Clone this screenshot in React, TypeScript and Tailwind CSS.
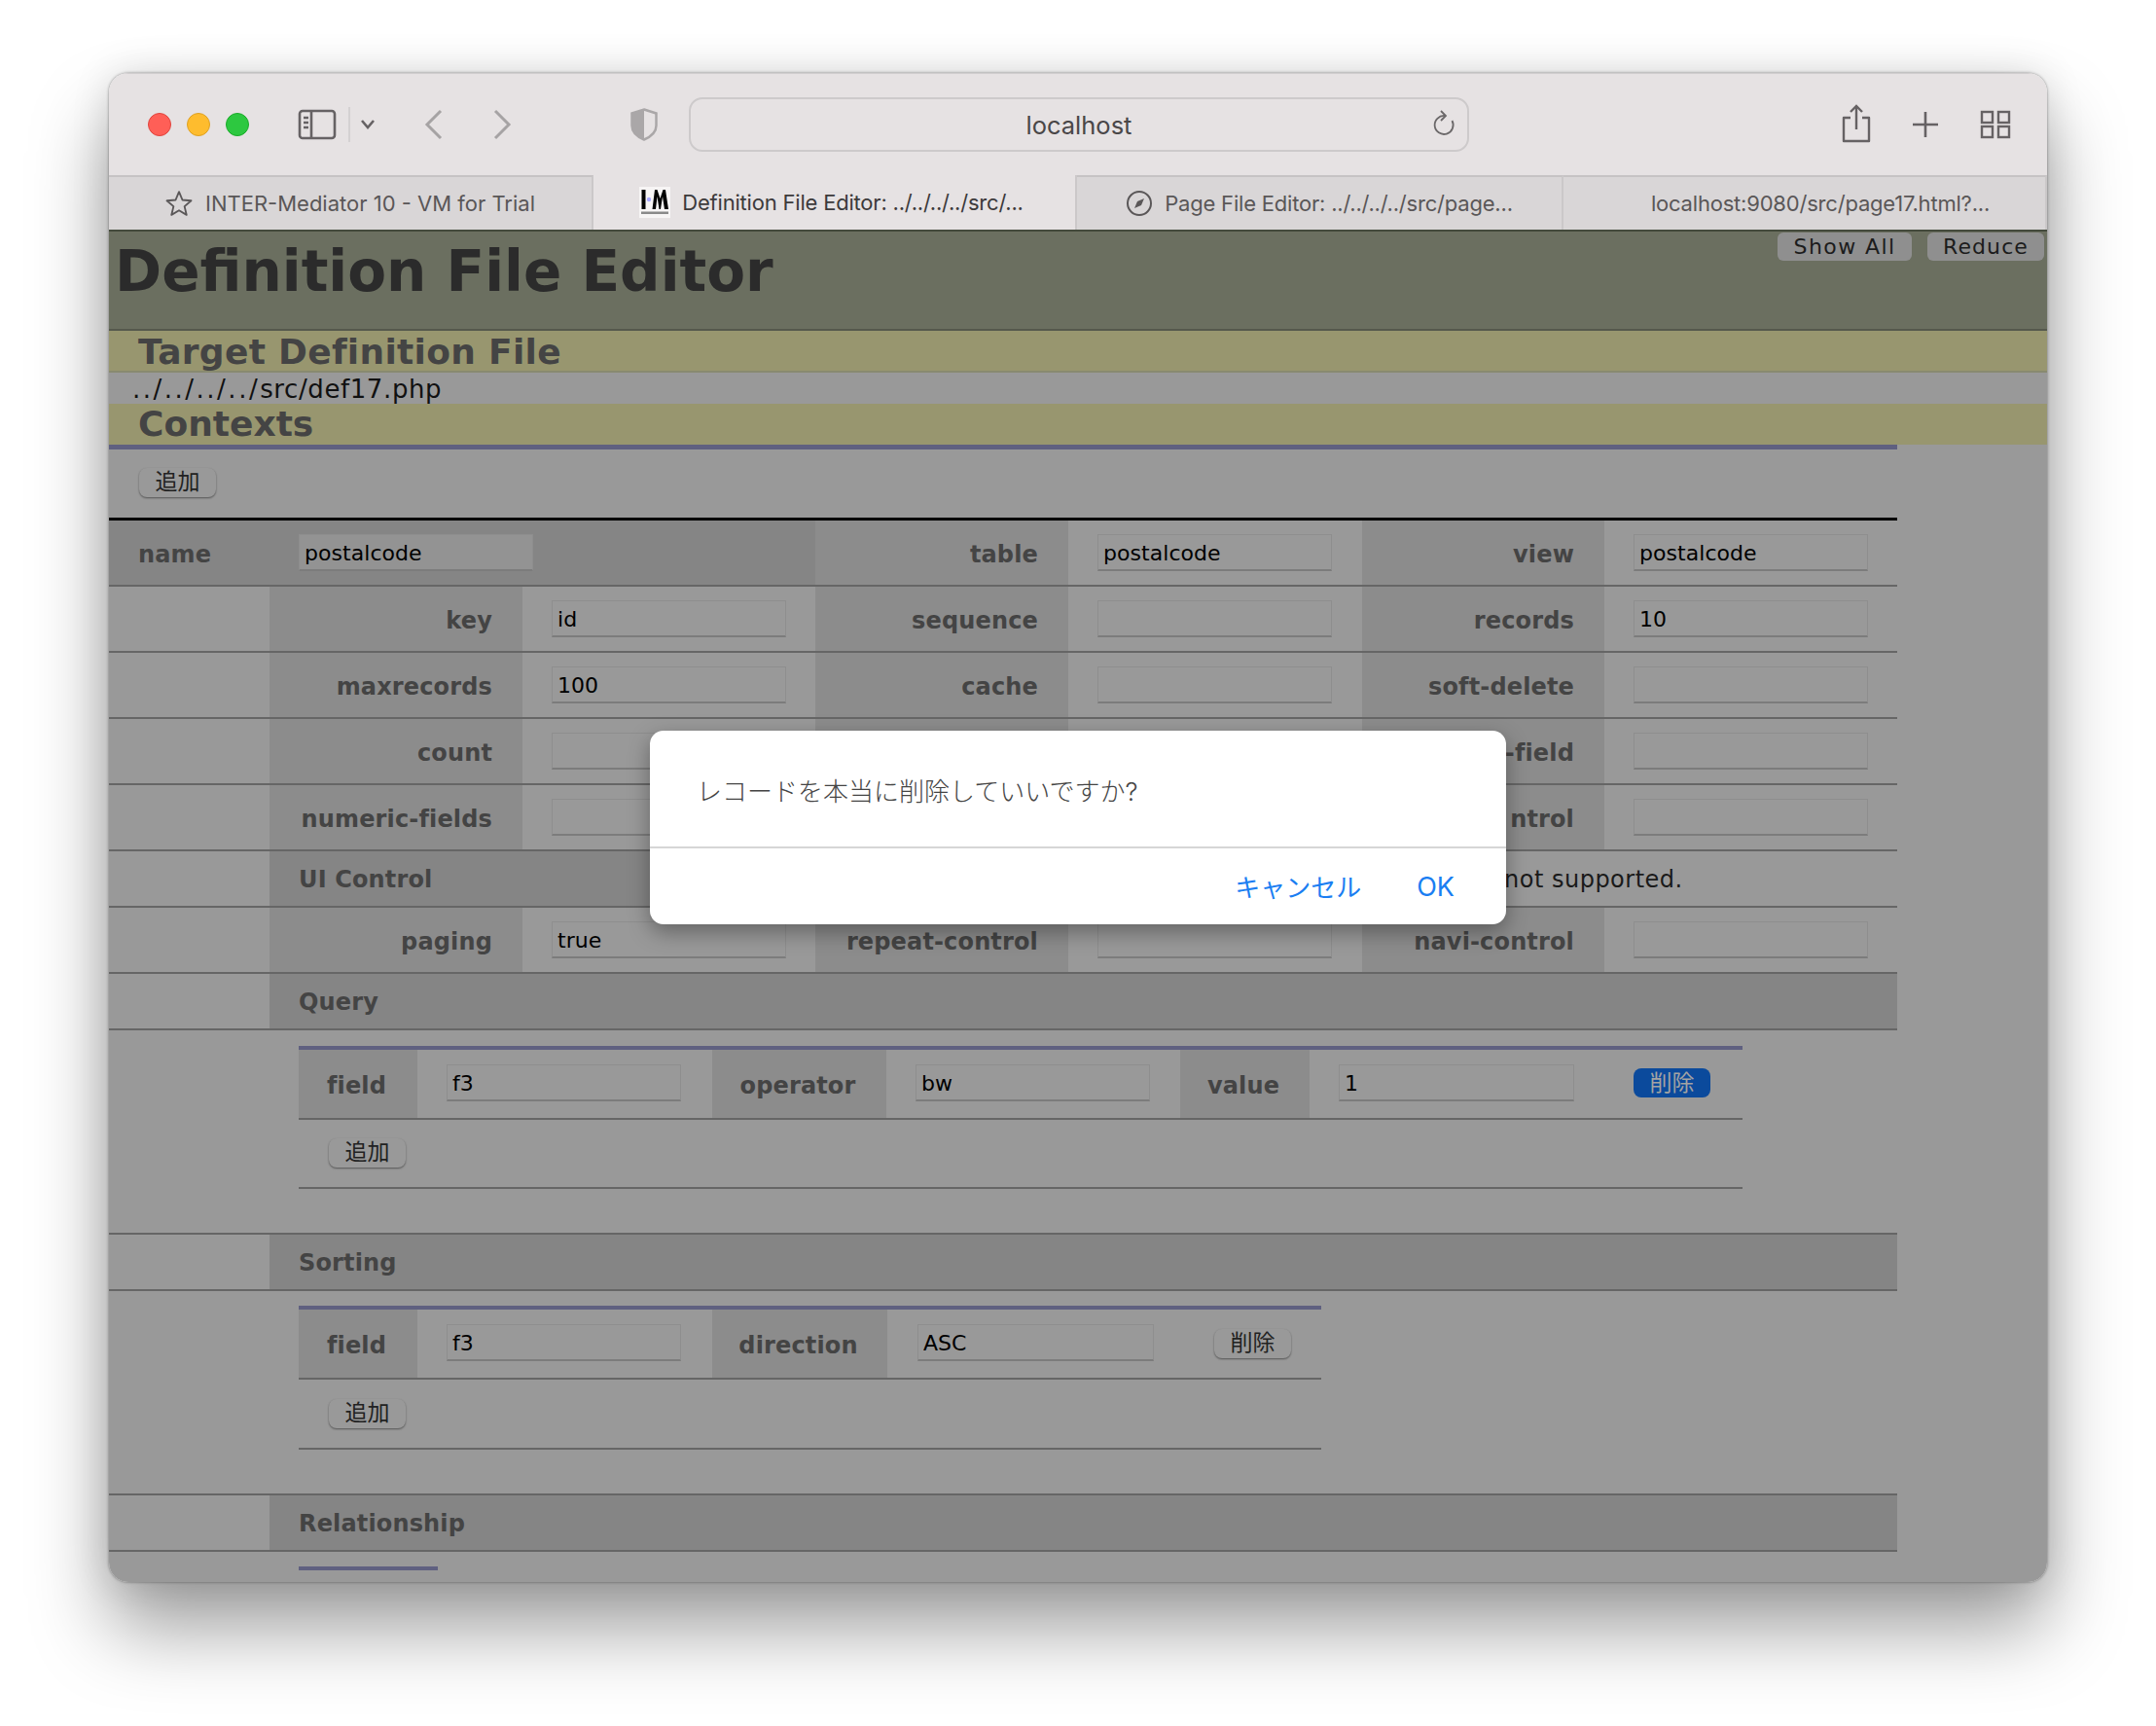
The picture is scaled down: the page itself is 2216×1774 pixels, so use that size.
import React from "react";

const sans = "font-[family-name:'DejaVu_Sans','Noto_Sans_CJK_JP',sans-serif]";

function Field({ value = "", w = "w-[241px]", light = false }: { value?: string; w?: string; light?: boolean }) {
  return (
    <input
      readOnly
      defaultValue={value}
      className={`${w} h-[38px] ${light ? "bg-[#939393]" : "bg-[#999999]"} border border-[#8e8e8e] border-b-2 border-b-[#7c7c7c] pl-[5px] pt-[2px] text-[22px] tracking-[0.05px] text-black outline-none ${sans}`}
    />
  );
}

function Th({ w, children, bg = "bg-[#8c8c8c]", center = false }: { w: string; children: React.ReactNode; bg?: string; center?: boolean }) {
  return (
    <div className={`${w} ${bg} flex h-full shrink-0 items-center ${center ? "justify-center pr-[3px]" : "justify-end pr-[31px]"} pt-[3px] text-[24px] font-bold tracking-[0.15px] text-[#444444]`}>
      {children}
    </div>
  );
}

function Td({ w, children, pad = "pl-[30px]" }: { w: string; children?: React.ReactNode; pad?: string }) {
  return <div className={`${w} ${pad} flex h-full shrink-0 items-center`}>{children}</div>;
}

function TripleRow({ cells, h = "h-[68px]" }: { cells: [string, string, string, string, string, string]; h?: string }) {
  const [a, av, b, bv, c, cv] = cells;
  return (
    <div className={`flex w-[1838px] ${h} border-b-2 border-[#666666]`}>
      <div className="h-full w-[165px] shrink-0" />
      <Th w="w-[260px]">{a}</Th>
      <Td w="w-[301px]"><Field value={av} /></Td>
      <Th w="w-[260px]">{b}</Th>
      <Td w="w-[302px]"><Field value={bv} /></Td>
      <Th w="w-[249px]">{c}</Th>
      <Td w="w-[301px]"><Field value={cv} /></Td>
    </div>
  );
}

function SectionRow({ title }: { title: string }) {
  return (
    <div className="flex h-[58px] w-[1838px] border-b-2 border-[#666666]">
      <div className="h-full w-[165px] shrink-0" />
      <div className="flex h-full flex-1 items-center bg-[#858585] pl-[30px] pt-[2px] text-[24px] font-bold tracking-[0.15px] text-[#444444]">{title}</div>
    </div>
  );
}

function SmallBtn({ children, primary = false }: { children: React.ReactNode; primary?: boolean }) {
  return (
    <button
      className={`flex h-[30px] w-[79px] items-center justify-center rounded-[8px] text-[23px] leading-none ${
        primary
          ? "bg-[#0b4a9c] text-[#a3a3a3]"
          : "bg-[#999999] text-[#222222] shadow-[0_1px_2px_rgba(0,0,0,0.45)]"
      }`}
    >
      {children}
    </button>
  );
}

function Logo() {
  return (
    <svg width="32" height="32" viewBox="0 0 32 32" className="shrink-0">
      <rect width="32" height="32" fill="#f7f5f5" />
      <rect x="2.5" y="3" width="4" height="20" fill="#000" />
      <circle cx="10" cy="13" r="2.2" fill="#a9a9ff" />
      <polygon points="13.5,23 16,3 18.5,3 21.5,12 24.5,3 27,3 30,23 26,23 24,10 22,23 20.5,23 18.5,10 17,23" fill="#000" />
      <rect x="2" y="25.5" width="28" height="2.5" fill="#8a8a8a" />
    </svg>
  );
}

function Tab({ w, active, children, icon, extra = "" }: { w: string; active?: boolean; children: React.ReactNode; icon?: React.ReactNode; extra?: string }) {
  return (
    <div
      className={`${w} ${extra} flex h-[56px] items-center justify-center gap-[12px] border-r-2 border-[#cbc8c9] text-[22px] ${
        active ? "bg-[#e6e2e3] text-[#3c3a3b]" : "border-t-2 border-t-[#c6c3c4] bg-[#d9d6d7] text-[#5a5758]"
      }`}
    >
      {icon}
      <span>{children}</span>
    </div>
  );
}

export default function App() {
  return (
    <div className="h-[1774px] w-[2216px] overflow-hidden bg-white pl-[112px] pt-[75px]">
      <div className="relative h-[1551px] w-[1992px] overflow-hidden rounded-[20px] shadow-[0_0_3px_rgba(0,0,0,0.45),0_0_40px_rgba(0,0,0,0.12),0_48px_80px_rgba(0,0,0,0.38)]">
        {/* browser chrome */}
        <div className="flex h-[105px] items-center border-t border-[#d0cdce] bg-[#e6e2e3] font-[family-name:'Inter',sans-serif]">
          <div className="ml-[40px] flex gap-[16px]">
            <span className="h-[24px] w-[24px] rounded-full border border-[#e0443e] bg-[#ff5f57]" />
            <span className="h-[24px] w-[24px] rounded-full border border-[#dea123] bg-[#febc2e]" />
            <span className="h-[24px] w-[24px] rounded-full border border-[#1aab29] bg-[#2dc840]" />
          </div>
          <svg width="40" height="32" viewBox="0 0 40 32" fill="none" className="ml-[50px]" stroke="#666264" strokeWidth="2.6">
            <rect x="2" y="2" width="36" height="28" rx="3" />
            <line x1="14" y1="2" x2="14" y2="30" />
            <line x1="6" y1="9" x2="11" y2="9" />
            <line x1="6" y1="14" x2="11" y2="14" />
            <line x1="6" y1="19" x2="11" y2="19" />
          </svg>
          <div className="ml-[12px] h-[36px] w-[2px] bg-[#d4d1d2]" />
          <svg width="16" height="12" viewBox="0 0 16 12" fill="none" className="ml-[10px]" stroke="#666264" strokeWidth="2.6">
            <polyline points="2,2 8,9 14,2" />
          </svg>
          <svg width="20" height="32" viewBox="0 0 20 32" fill="none" className="ml-[50px]" stroke="#a6a3a4" strokeWidth="3">
            <polyline points="17,2 3,16 17,30" />
          </svg>
          <svg width="20" height="32" viewBox="0 0 20 32" fill="none" className="ml-[50px]" stroke="#a6a3a4" strokeWidth="3">
            <polyline points="3,2 17,16 3,30" />
          </svg>
          <svg width="28" height="34" viewBox="0 0 28 34" fill="none" className="ml-[122px]">
            <path d="M14 1.5 L26.5 5.5 V18 C26.5 25 21 29.5 14 32.5 C7 29.5 1.5 25 1.5 18 V5.5 Z" stroke="#aaa7a8" strokeWidth="2.5" />
            <path d="M14 1.5 L1.5 5.5 V18 C1.5 25 7 29.5 14 32.5 Z" fill="#aaa7a8" />
          </svg>
          <div className="relative ml-[32px] flex h-[56px] w-[802px] items-center justify-center rounded-[14px] border-2 border-[#cdcacb] pt-[3px] text-[25.5px] text-[#4a4748]">
            localhost
            <svg width="24" height="30" viewBox="0 0 24 30" fill="none" className="absolute right-[12px] top-[11px]" stroke="#6b6869" strokeWidth="1.8">
              <path d="M13 6 A9.5 9.5 0 1 0 20.5 11" />
              <polyline points="9,1 14,6 9,11" />
            </svg>
          </div>
          <svg width="32" height="40" viewBox="0 0 32 40" fill="none" className="ml-[382px] -translate-y-[1px]" stroke="#666264" strokeWidth="2.4">
            <path d="M10 14 H3 V38 H29 V14 H22" strokeLinejoin="round" />
            <line x1="16" y1="2" x2="16" y2="26" />
            <polyline points="10,8 16,2 22,8" />
          </svg>
          <svg width="28" height="28" viewBox="0 0 28 28" fill="none" className="ml-[41px]" stroke="#666264" strokeWidth="2.6">
            <line x1="14" y1="1" x2="14" y2="27" />
            <line x1="1" y1="14" x2="27" y2="14" />
          </svg>
          <svg width="32" height="30" viewBox="0 0 32 30" fill="none" className="ml-[42px]" stroke="#666264" strokeWidth="2.4">
            <rect x="2" y="2" width="11" height="11" />
            <rect x="19" y="2" width="11" height="11" />
            <rect x="2" y="17" width="11" height="11" />
            <rect x="19" y="17" width="11" height="11" />
          </svg>
        </div>
        {/* tabs */}
        <div className="flex h-[56px] font-[family-name:'Inter',sans-serif]">
          <Tab
            w="w-[498px]"
            extra="pr-[1px]"
            icon={
              <svg width="30" height="30" viewBox="0 0 24 24" fill="none" stroke="#5a5758" strokeWidth="1.5" strokeLinejoin="round">
                <polygon points="12,2.5 14.8,9.2 22,9.8 16.5,14.5 18.2,21.5 12,17.8 5.8,21.5 7.5,14.5 2,9.8 9.2,9.2" />
              </svg>
            }
          >
            INTER-Mediator 10 - VM for Trial
          </Tab>
          <Tab w="w-[497px]" active icon={<Logo />} extra="tracking-[-0.2px] pr-[6px]">
            Definition File Editor: ../../../../src/...
          </Tab>
          <Tab
            w="w-[500px]"
            extra="tracking-[-0.2px]"
            icon={
              <svg width="28" height="28" viewBox="0 0 28 28" fill="none">
                <circle cx="14" cy="14" r="12" stroke="#5a5758" strokeWidth="2" />
                <polygon points="19,9 16,16 9,19 12,12" fill="#5a5758" />
              </svg>
            }
          >
            Page File Editor: ../../../../src/page...
          </Tab>
          <Tab w="w-[497px]" extra="pl-[33px] tracking-[-0.2px]">localhost:9080/src/page17.html?...</Tab>
        </div>
        {/* page */}
        <div className={`h-[1390px] bg-[#999999] ${sans}`}>
          <div className="flex h-[104px] items-start justify-between border-y-2 border-t-[#444a3c] border-b-[#55584d] bg-[#6b6f60]">
            <h1 className="ml-[6px] mt-[5px] text-[58px] font-bold leading-[72px] text-[#2b2b2b]">Definition File Editor</h1>
            <div className="mr-[3px] mt-[1px] flex gap-[16px]">
              <button className="h-[29px] w-[138px] rounded-[6px] bg-[#8f8f8f] text-[22px] leading-[28px] tracking-[1.4px] text-[#1c1c1c]">Show All</button>
              <button className="h-[29px] w-[120px] rounded-[6px] bg-[#8f8f8f] text-[22px] leading-[28px] tracking-[1.1px] text-[#1c1c1c]">Reduce</button>
            </div>
          </div>
          <div className="h-[43px] border-b-2 border-[#888a70] bg-[#98966f] pl-[30px] text-[36px] font-bold leading-[44px] tracking-[0.3px] text-[#444444]">Target Definition File</div>
          <div className="h-[32px] pl-[24px] pt-[1px] text-[26px] leading-[32px] tracking-[0.6px] text-[#111111]">
            <span className="tracking-[2.5px]">../../../../</span>src/def17.php
          </div>
          <div className="h-[42px] bg-[#98966f] pl-[30px] text-[36px] font-bold leading-[42px] text-[#444444]">Contexts</div>

          <div className="w-[1838px]">
            <div className="h-[5px] bg-[#5f6080]" />
            <div className="flex h-[73px] items-center border-b-[3px] border-black pb-[3px] pl-[31px]">
              <SmallBtn>追加</SmallBtn>
            </div>

            <div className="flex h-[68px] border-b-2 border-[#666666]">
              <div className="flex h-full w-[726px] shrink-0 items-center bg-[#858585]">
                <span className="w-[195px] pl-[30px] pt-[3px] text-[24px] font-bold tracking-[0.15px] text-[#444444]">name</span>
                <Field value="postalcode" light />
              </div>
              <Th w="w-[260px]">table</Th>
              <Td w="w-[302px]"><Field value="postalcode" /></Td>
              <Th w="w-[249px]">view</Th>
              <Td w="w-[301px]"><Field value="postalcode" /></Td>
            </div>
            <TripleRow cells={["key", "id", "sequence", "", "records", "10"]} />
            <TripleRow cells={["maxrecords", "100", "cache", "", "soft-delete", ""]} />
            <TripleRow cells={["count", "", "", "", "-field", ""]} />
            <TripleRow cells={["numeric-fields", "", "", "", "ntrol", ""]} />
            <div className="flex h-[58px] border-b-2 border-[#666666]">
              <div className="h-full w-[165px] shrink-0" />
              <div className="flex h-full w-[561px] items-center bg-[#858585] pl-[30px] pt-[2px] text-[24px] font-bold tracking-[0.15px] text-[#444444]">UI Control</div>
              <div className="flex h-full flex-1 items-center pl-[708px] pt-[2px] text-[24px] tracking-[0.5px] text-[#1a1a1a]">not supported.</div>
            </div>
            <TripleRow cells={["paging", "true", "repeat-control", "", "navi-control", ""]} />

            <SectionRow title="Query" />
            <div className="flex h-[210px] flex-col border-b-2 border-[#666666] pl-[195px] pt-[16px]">
              <div className="w-[1484px]">
                <div className="h-[4px] bg-[#5f6080]" />
                <div className="flex h-[72px] border-b-2 border-[#666666]">
                  <Th w="w-[122px]" center>field</Th>
                  <Td w="w-[303px]" pad="pl-[30px] pb-[3px]"><Field value="f3" /></Td>
                  <Th w="w-[179px]" center>operator</Th>
                  <Td w="w-[302px]" pad="pl-[30px] pb-[3px]"><Field value="bw" /></Td>
                  <Th w="w-[133px]" center>value</Th>
                  <Td w="w-[303px]" pad="pl-[30px] pb-[3px]"><Field value="1" w="w-[242px]" /></Td>
                  <div className="flex h-full items-center pb-[2px] pl-[30px]"><SmallBtn primary>削除</SmallBtn></div>
                </div>
                <div className="flex h-[71px] items-center border-b-2 border-[#666666] pb-[2px] pl-[31px]">
                  <SmallBtn>追加</SmallBtn>
                </div>
              </div>
            </div>

            <SectionRow title="Sorting" />
            <div className="flex h-[210px] flex-col border-b-2 border-[#666666] pl-[195px] pt-[15px]">
              <div className="w-[1051px]">
                <div className="h-[4px] bg-[#5f6080]" />
                <div className="flex h-[72px] border-b-2 border-[#666666]">
                  <Th w="w-[122px]" center>field</Th>
                  <Td w="w-[303px]" pad="pl-[30px] pb-[2px]"><Field value="f3" /></Td>
                  <Th w="w-[180px]" center>direction</Th>
                  <Td w="w-[305px]" pad="pl-[31px] pb-[2px]"><Field value="ASC" w="w-[243px]" /></Td>
                  <div className="flex h-full items-center pb-[1px] pl-[31px]"><SmallBtn>削除</SmallBtn></div>
                </div>
                <div className="flex h-[72px] items-center border-b-2 border-[#666666] pb-[1px] pl-[31px]">
                  <SmallBtn>追加</SmallBtn>
                </div>
              </div>
            </div>

            <SectionRow title="Relationship" />
            <div className="pl-[195px] pt-[15px]">
              <div className="h-[4px] w-[143px] bg-[#5f6080]" />
            </div>
          </div>
        </div>

        {/* dialog */}
        <div className="absolute left-[556px] top-[676px] flex h-[199px] w-[880px] flex-col rounded-[14px] bg-white shadow-[0_8px_22px_rgba(0,0,0,0.35)] font-[family-name:'Inter','Noto_Sans_CJK_JP',sans-serif]">
          <div className="flex h-[121px] items-center border-b-2 border-[#d6d6d6] pl-[48px] pt-[5px] text-[26px] font-light text-[#444444]">レコードを本当に削除していいですか?</div>
          <div className="flex flex-1 items-center justify-end gap-[57px] pr-[53px] pt-[2px] text-[27px] text-[#1a7ef2]">
            <span className="text-[26px]">キャンセル</span>
            <span>OK</span>
          </div>
        </div>
      </div>
    </div>
  );
}
